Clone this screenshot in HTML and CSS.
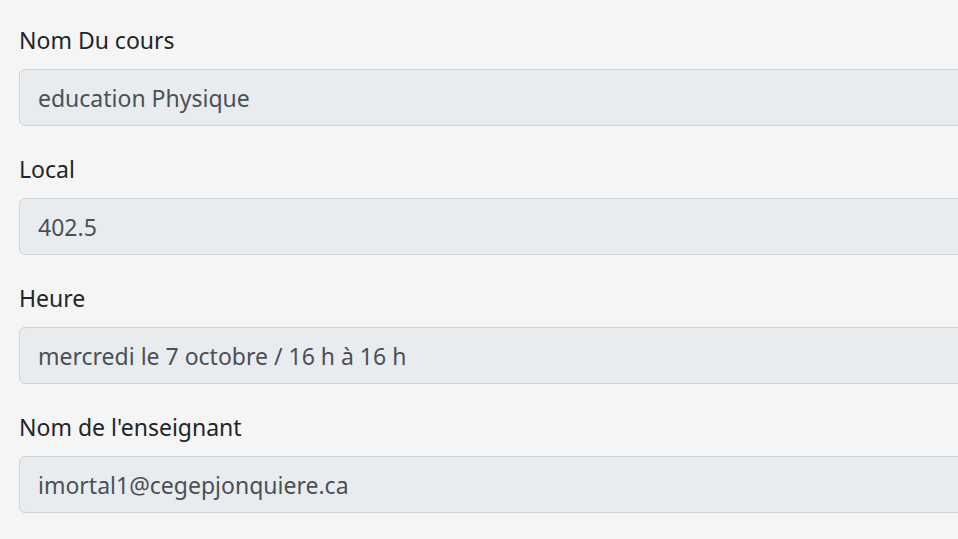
FILE: index.html
```html
<!DOCTYPE html>
<html lang="fr">
<head>
<meta charset="utf-8">
<title>Cours</title>
<link rel="stylesheet" href="styles.css">
</head>
<body>
<form class="form">
  <div class="form-group">
    <label class="label">Nom Du cours</label>
    <input class="input" type="text" value="education Physique" disabled>
  </div>
  <div class="form-group">
    <label class="label">Local</label>
    <input class="input" type="text" value="402.5" disabled>
  </div>
  <div class="form-group">
    <label class="label">Heure</label>
    <input class="input" type="text" value="mercredi le 7 octobre / 16 h à 16 h" disabled>
  </div>
  <div class="form-group">
    <label class="label">Nom de l'enseignant</label>
    <input class="input" type="text" value="imortal1@cegepjonquiere.ca" disabled>
  </div>
</form>
</body>
</html>
```
FILE: styles.css
```css
html, body {
  margin: 0;
  padding: 0;
  background: #f5f5f5;
  overflow: hidden;
}
body {
  font-family: "Noto Sans", "Open Sans", "DejaVu Sans", sans-serif;
  color: #212529;
}
.form {
  width: 1100px;
  padding: 22px 0 0 19px;
  margin: 0;
}
.form-group {
  display: flex;
  flex-direction: column;
  margin-bottom: 25px;
}
.label {
  display: block;
  font-size: 23px;
  line-height: 36px;
  margin-bottom: 11px;
  color: #212529;
}
.input {
  box-sizing: border-box;
  width: 100%;
  height: 57px;
  padding: 9px 18px;
  font-family: inherit;
  font-size: 23px;
  line-height: 36px;
  color: #495057;
  background: #e9ecef;
  border: 1.5px solid #ced4da;
  border-radius: 6px;
  opacity: 1;
  -webkit-text-fill-color: #495057;
}
```
